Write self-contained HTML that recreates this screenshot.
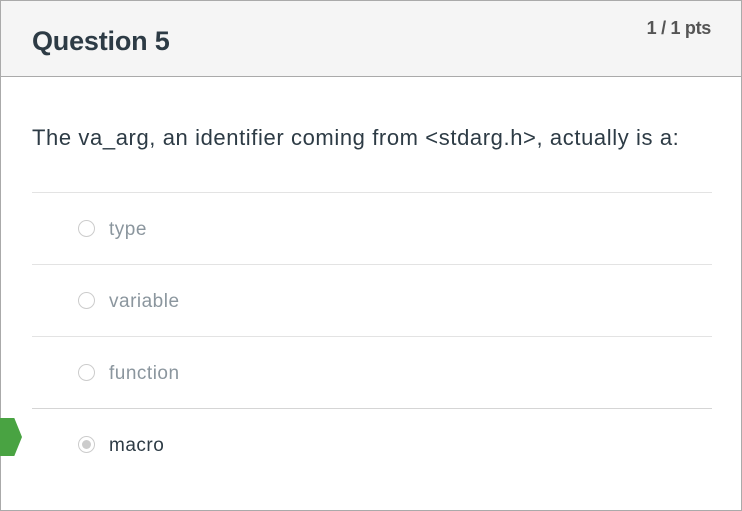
<!DOCTYPE html>
<html><head><style>
body{margin:0;width:742px;height:511px;overflow:hidden;background:#fff;font-family:"Liberation Sans",sans-serif;}
.box{position:absolute;left:0;top:0;width:740px;height:509px;border:1px solid #aaa;}
.hdr{position:absolute;left:0;top:0;width:740px;height:75px;background:#f5f5f5;border-bottom:1px solid #aaa;}
.t{position:absolute;left:31px;top:25px;font-size:27px;font-weight:bold;color:#2d3b45;letter-spacing:-0.2px;}
.p{position:absolute;right:30px;top:17px;font-size:18px;font-weight:bold;color:#555;letter-spacing:-0.3px;}
.q{position:absolute;left:31px;top:124px;font-size:22px;color:#2d3b45;letter-spacing:0.6px;}
.line{position:absolute;left:31px;width:680px;height:1px;background:#e3e3e3;}
.r{position:absolute;left:77px;width:17px;height:17px;border:1px solid #ccc;border-radius:50%;box-sizing:border-box;background:#fff;}
.l{position:absolute;left:108px;font-size:19px;color:#8b969e;letter-spacing:0.5px;}
.arrow{position:absolute;left:0;top:418px;width:22px;height:38px;background:#49a342;clip-path:polygon(0 0,65% 0,100% 50%,65% 100%,0 100%);}
</style></head><body>
<div class="box">
<div class="hdr"><div class="t">Question 5</div><div class="p">1 / 1 pts</div></div>
<div class="q">The va_arg, an identifier coming from &lt;stdarg.h&gt;, actually is a:</div>
<div class="line" style="top:191px"></div>
<div class="r" style="top:219px"></div><div class="l" style="top:218px">type</div>
<div class="line" style="top:263px"></div>
<div class="r" style="top:291px"></div><div class="l" style="top:290px">variable</div>
<div class="line" style="top:335px"></div>
<div class="r" style="top:363px"></div><div class="l" style="top:362px">function</div>
<div class="line" style="top:407px;background:#d5d5d5"></div>
<div class="r" style="top:435px"><div style="position:absolute;left:3px;top:3px;width:9px;height:9px;border-radius:50%;background:#ccc"></div></div>
<div class="l" style="top:434px;color:#2d3b45">macro</div>
</div>
<div class="arrow"></div>
</body></html>
